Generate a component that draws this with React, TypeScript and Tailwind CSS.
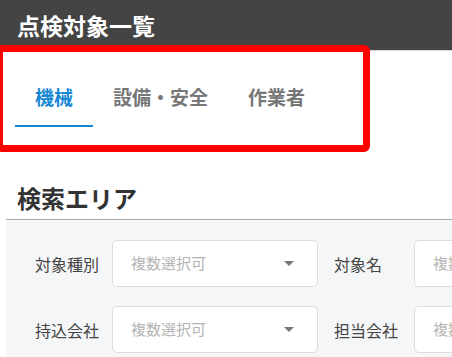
import React from "react";

const tabs = ["機械", "設備・安全", "作業者"];

function Caret() {
  return (
    <svg width="10" height="5" viewBox="0 0 10 5" className="shrink-0">
      <path d="M0 0 L10 0 L5 5 Z" fill="#777" />
    </svg>
  );
}

function Select({ caret = true }: { caret?: boolean }) {
  return (
    <div className="flex h-[47px] items-center justify-between rounded-[5px] border border-[#dcdcdc] bg-white pl-[18px] pr-[23px]">
      <span className="whitespace-nowrap text-[15px] text-[#b4b4b4]">複数選択可</span>
      {caret && <Caret />}
    </div>
  );
}

export default function App() {
  return (
    <div
      className="relative h-[357px] w-[452px] overflow-hidden bg-white"
      style={{ fontFamily: '"Noto Sans CJK JP", "Noto Sans", sans-serif' }}
    >
      <header className="flex h-[51px] items-center border-b border-[#d8d8d8] bg-[#444444] pl-[17px]">
        <h1 className="text-[23px] font-bold leading-none text-white">点検対象一覧</h1>
      </header>

      <nav className="flex h-[76px] items-end pl-[15px]">
        {tabs.map((t, i) => (
          <div
            key={t}
            className={
              i === 0
                ? "flex h-[54px] items-start border-b-2 border-[#1688d2] px-5 text-[19px] font-bold leading-none text-[#1688d2]"
                : "flex h-[54px] items-start border-b-2 border-transparent px-5 text-[19px] font-bold leading-none text-[#777777]"
            }
          >
            <span className="pt-[14px]">{t}</span>
          </div>
        ))}
      </nav>

      <section className="ml-[6px] mt-[59px]">
        <h2 className="border-b border-[#a8a8a8] pb-[9px] pl-[11px] text-[24px] font-bold leading-none text-[#333333]">
          検索エリア
        </h2>
        <div className="grid grid-cols-[77px_206px_96px_1fr] items-center gap-y-[19px] bg-[#f5f6f8] pl-[29px] pt-[20px] pb-[20px]">
          <span className="text-[16px] text-[#444]">対象種別</span>
          <Select />
          <span className="pl-[16px] text-[16px] text-[#444]">対象名</span>
          <div className="w-[120px]">
            <Select caret={false} />
          </div>
          <span className="text-[16px] text-[#444]">持込会社</span>
          <Select />
          <span className="pl-[16px] text-[16px] text-[#444]">担当会社</span>
          <div className="w-[120px]">
            <Select caret={false} />
          </div>
        </div>
      </section>

      <div className="pointer-events-none absolute left-[-4px] top-[45px] h-[107px] w-[374px] rounded-[6px] border-[7px] border-[#ff0000]" />
    </div>
  );
}
